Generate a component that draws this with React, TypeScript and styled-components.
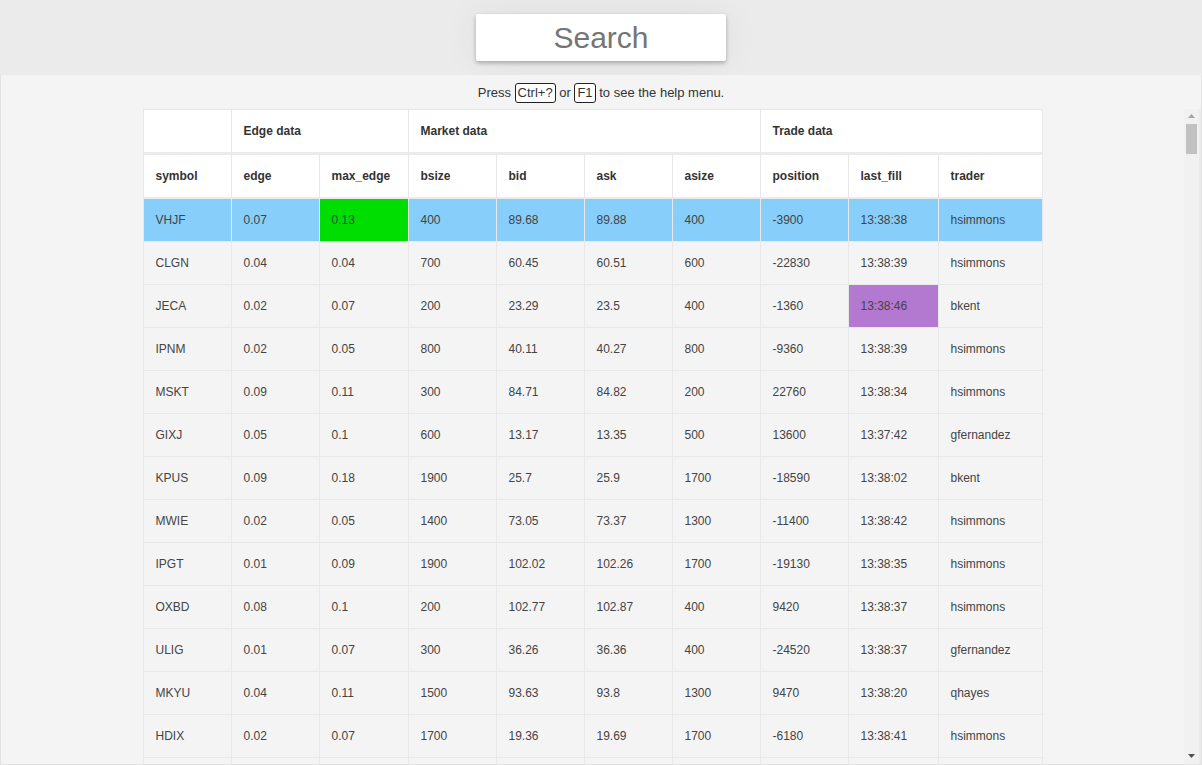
import React from "react";
import styled, { createGlobalStyle } from "styled-components";

const GlobalStyle = createGlobalStyle`
  html, body {
    margin: 0;
    padding: 0;
    height: 100%;
    background: #ebebeb;
    font-family: "Liberation Sans", Arial, sans-serif;
  }
  #root { height: 100%; }
`;

type Row = {
  symbol: string;
  edge: string;
  maxEdge: string;
  bsize: number;
  bid: string;
  ask: string;
  asize: number;
  position: number;
  lastFill: string;
  trader: string;
  highlight?: boolean;
  edgeFlag?: boolean;
  fillFlag?: boolean;
};

const base: Row[] = [
  { symbol: "VHJF", edge: "0.07", maxEdge: "0.13", bsize: 400, bid: "89.68", ask: "89.88", asize: 400, position: -3900, lastFill: "13:38:38", trader: "hsimmons", highlight: true, edgeFlag: true },
  { symbol: "CLGN", edge: "0.04", maxEdge: "0.04", bsize: 700, bid: "60.45", ask: "60.51", asize: 600, position: -22830, lastFill: "13:38:39", trader: "hsimmons" },
  { symbol: "JECA", edge: "0.02", maxEdge: "0.07", bsize: 200, bid: "23.29", ask: "23.5", asize: 400, position: -1360, lastFill: "13:38:46", trader: "bkent", fillFlag: true },
  { symbol: "IPNM", edge: "0.02", maxEdge: "0.05", bsize: 800, bid: "40.11", ask: "40.27", asize: 800, position: -9360, lastFill: "13:38:39", trader: "hsimmons" },
  { symbol: "MSKT", edge: "0.09", maxEdge: "0.11", bsize: 300, bid: "84.71", ask: "84.82", asize: 200, position: 22760, lastFill: "13:38:34", trader: "hsimmons" },
  { symbol: "GIXJ", edge: "0.05", maxEdge: "0.1", bsize: 600, bid: "13.17", ask: "13.35", asize: 500, position: 13600, lastFill: "13:37:42", trader: "gfernandez" },
  { symbol: "KPUS", edge: "0.09", maxEdge: "0.18", bsize: 1900, bid: "25.7", ask: "25.9", asize: 1700, position: -18590, lastFill: "13:38:02", trader: "bkent" },
  { symbol: "MWIE", edge: "0.02", maxEdge: "0.05", bsize: 1400, bid: "73.05", ask: "73.37", asize: 1300, position: -11400, lastFill: "13:38:42", trader: "hsimmons" },
  { symbol: "IPGT", edge: "0.01", maxEdge: "0.09", bsize: 1900, bid: "102.02", ask: "102.26", asize: 1700, position: -19130, lastFill: "13:38:35", trader: "hsimmons" },
  { symbol: "OXBD", edge: "0.08", maxEdge: "0.1", bsize: 200, bid: "102.77", ask: "102.87", asize: 400, position: 9420, lastFill: "13:38:37", trader: "hsimmons" },
  { symbol: "ULIG", edge: "0.01", maxEdge: "0.07", bsize: 300, bid: "36.26", ask: "36.36", asize: 400, position: -24520, lastFill: "13:38:37", trader: "gfernandez" },
  { symbol: "MKYU", edge: "0.04", maxEdge: "0.11", bsize: 1500, bid: "93.63", ask: "93.8", asize: 1300, position: 9470, lastFill: "13:38:20", trader: "qhayes" },
  { symbol: "HDIX", edge: "0.02", maxEdge: "0.07", bsize: 1700, bid: "19.36", ask: "19.69", asize: 1700, position: -6180, lastFill: "13:38:41", trader: "hsimmons" },
];

function makeRows(total: number): Row[] {
  let seed = 12345;
  const rnd = () => {
    seed = (seed * 1103515245 + 12345) % 2147483648;
    return seed / 2147483648;
  };
  const letters = "ABCDEFGHIJKLMNOPQRSTUVWXYZ";
  const traders = ["hsimmons", "bkent", "gfernandez", "qhayes"];
  const rows = [...base];
  while (rows.length < total) {
    let sym = "";
    for (let i = 0; i < 4; i++) sym += letters[Math.floor(rnd() * 26)];
    const bid = 10 + rnd() * 100;
    const ask = bid + 0.05 + rnd() * 0.3;
    const edge = 0.01 + Math.floor(rnd() * 9) / 100;
    rows.push({
      symbol: sym,
      edge: String(Number(edge.toFixed(2))),
      maxEdge: String(Number((edge + Math.floor(rnd() * 10) / 100).toFixed(2))),
      bsize: (1 + Math.floor(rnd() * 19)) * 100,
      bid: String(Number(bid.toFixed(2))),
      ask: String(Number(ask.toFixed(2))),
      asize: (1 + Math.floor(rnd() * 19)) * 100,
      position: Math.round((rnd() - 0.5) * 5000) * 10,
      lastFill: `13:38:${String(Math.floor(rnd() * 50)).padStart(2, "0")}`,
      trader: traders[Math.floor(rnd() * traders.length)],
    });
  }
  return rows;
}

const rows = makeRows(316);

const columns = ["symbol", "edge", "max_edge", "bsize", "bid", "ask", "asize", "position", "last_fill", "trader"];

const Page = styled.div`
  height: 100%;
  display: flex;
  flex-direction: column;
`;

const TopBar = styled.header`
  height: 75px;
  flex: none;
  display: flex;
  justify-content: center;
  align-items: flex-start;
  padding-top: 14px;
  box-sizing: border-box;
  background: #ebebeb;
`;

const SearchInput = styled.input`
  width: 250px;
  height: 47px;
  box-sizing: border-box;
  border: none;
  border-radius: 2px;
  background: #fff;
  box-shadow: 0 2px 4px rgba(0, 0, 0, 0.28), 0 0 40px rgba(0, 0, 0, 0.06);
  font-family: "Liberation Sans", Arial, sans-serif;
  font-size: 30px;
  text-align: center;
  color: #333;
  outline: none;
  padding: 0;
  &::placeholder {
    color: #757575;
  }
`;

const Panel = styled.main`
  flex: 1;
  min-height: 0;
  display: flex;
  flex-direction: column;
  background: #f4f4f4;
  border: 1px solid #e2e2e2;
  border-top: none;
`;

const HelpLine = styled.p`
  margin: 0;
  height: 34px;
  box-sizing: border-box;
  padding-top: 2px;
  flex: none;
  line-height: 32px;
  text-align: center;
  font-size: 13px;
  color: #333;
`;

const Key = styled.kbd`
  display: inline-block;
  font-family: "Liberation Sans", Arial, sans-serif;
  font-size: 13px;
  border: 1px solid #222;
  border-radius: 3px;
  padding: 2px 2px;
  line-height: 14px;
  background: #fff;
  color: #333;
`;

const Body = styled.div`
  flex: 1;
  min-height: 0;
  display: flex;
`;

const ScrollArea = styled.div`
  flex: 1;
  min-width: 0;
  overflow-y: scroll;
  scrollbar-width: none;
  &::-webkit-scrollbar {
    display: none;
  }
`;

const Track = styled.div`
  width: 15px;
  flex: none;
  display: flex;
  flex-direction: column;
  background: #f1f1f1;
  border-right: 2px solid #ebebeb;
`;

const ArrowButton = styled.div`
  height: 15px;
  flex: none;
  display: flex;
  justify-content: center;
  align-items: flex-start;
  padding-top: 5px;
  box-sizing: border-box;
`;

const Gutter = styled.div`
  flex: 1;
  padding: 0 2px;
`;

const Thumb = styled.div`
  height: 30px;
  background: #c1c1c1;
`;

const Grid = styled.div`
  width: 900px;
  margin: 0 auto;
  border-top: 1px solid #e6e6e6;
  font-size: 12px;
`;

const GridRow = styled.div<{ $highlight?: boolean }>`
  display: grid;
  grid-template-columns: 88px 88px 89px 88px 88px 88px 88px 88px 90px 105px;
  background: ${(p) => (p.$highlight ? "#87cefa" : "#f4f4f4")};
`;

const BaseCell = styled.div`
  box-sizing: border-box;
  display: flex;
  align-items: center;
  padding: 0 12px;
  border-left: 1px solid #e8e8e8;
  white-space: nowrap;
  overflow: hidden;
  &:last-child {
    border-right: 1px solid #e8e8e8;
  }
`;

const GroupCell = styled(BaseCell)<{ $span: number }>`
  grid-column: span ${(p) => p.$span};
  height: 45px;
  padding-bottom: 1px;
  border-bottom: 3px solid #ebebeb;
  background: #fff;
  color: #333;
  font-weight: bold;
`;

const HeadCell = styled(BaseCell)`
  height: 44px;
  border-bottom: 2px solid #ebebeb;
  background: #fff;
  color: #333;
  font-weight: bold;
`;

const DataCell = styled(BaseCell)<{ $flag?: "edge" | "fill" }>`
  height: 43px;
  border-bottom: 1px solid #e8e8e8;
  color: #444;
  background: ${(p) => (p.$flag === "edge" ? "#00dd00" : p.$flag === "fill" ? "#b378d0" : "transparent")};
`;

function Arrow({ up, color }: { up?: boolean; color: string }) {
  return (
    <svg width="7" height="4" viewBox="0 0 7 4">
      <polygon points={up ? "0,4 7,4 3.5,0" : "0,0 7,0 3.5,4"} fill={color} />
    </svg>
  );
}

export default function App() {
  return (
    <Page>
      <GlobalStyle />
      <TopBar>
        <SearchInput placeholder="Search" />
      </TopBar>
      <Panel>
        <HelpLine>
          Press <Key>Ctrl+?</Key> or <Key>F1</Key> to see the help menu.
        </HelpLine>
        <Body>
          <ScrollArea>
            <Grid role="table">
              <GridRow role="row">
                <GroupCell role="columnheader" $span={1} />
                <GroupCell role="columnheader" $span={2}>Edge data</GroupCell>
                <GroupCell role="columnheader" $span={4}>Market data</GroupCell>
                <GroupCell role="columnheader" $span={3}>Trade data</GroupCell>
              </GridRow>
              <GridRow role="row">
                {columns.map((c) => (
                  <HeadCell role="columnheader" key={c}>{c}</HeadCell>
                ))}
              </GridRow>
              {rows.map((r, i) => (
                <GridRow role="row" key={i} $highlight={r.highlight}>
                  <DataCell role="cell">{r.symbol}</DataCell>
                  <DataCell role="cell">{r.edge}</DataCell>
                  <DataCell role="cell" $flag={r.edgeFlag ? "edge" : undefined}>{r.maxEdge}</DataCell>
                  <DataCell role="cell">{r.bsize}</DataCell>
                  <DataCell role="cell">{r.bid}</DataCell>
                  <DataCell role="cell">{r.ask}</DataCell>
                  <DataCell role="cell">{r.asize}</DataCell>
                  <DataCell role="cell">{r.position}</DataCell>
                  <DataCell role="cell" $flag={r.fillFlag ? "fill" : undefined}>{r.lastFill}</DataCell>
                  <DataCell role="cell">{r.trader}</DataCell>
                </GridRow>
              ))}
            </Grid>
          </ScrollArea>
          <Track aria-hidden="true">
            <ArrowButton>
              <Arrow up color="#a3a3a3" />
            </ArrowButton>
            <Gutter>
              <Thumb />
            </Gutter>
            <ArrowButton>
              <Arrow color="#505050" />
            </ArrowButton>
          </Track>
        </Body>
      </Panel>
    </Page>
  );
}
